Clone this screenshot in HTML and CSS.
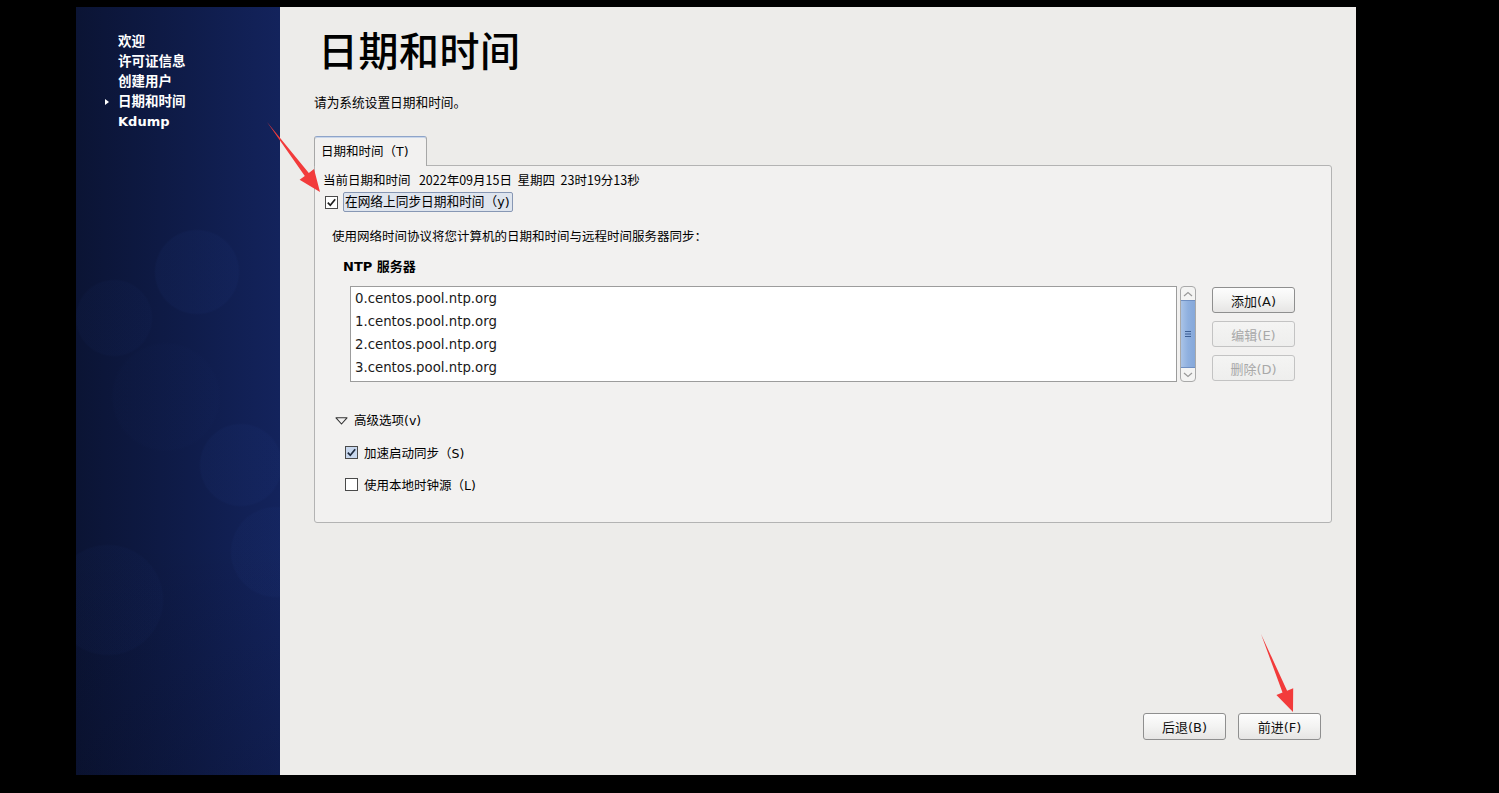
FILE: index.html
```html
<!DOCTYPE html>
<html lang="zh-CN">
<head>
<meta charset="utf-8">
<title>日期和时间</title>
<link rel="stylesheet" href="styles.css">
</head>
<body>
<div class="screen">
  <div class="window">
    <aside class="sidebar">
      <ul class="steps">
        <li>欢迎</li>
        <li>许可证信息</li>
        <li>创建用户</li>
        <li class="current">日期和时间</li>
        <li class="latin">Kdump</li>
      </ul>
    </aside>
    <main class="main">
      <h1 class="title">日期和时间</h1>
      <p class="intro">请为系统设置日期和时间。</p>
      <div class="tabs"><div class="tab">日期和时间（T)</div></div>
      <section class="panel">
        <div class="now">当前日期和时间&nbsp;&nbsp;&nbsp;2022年09月15日&nbsp;&nbsp;星期四&nbsp;&nbsp;23时19分13秒</div>
        <div class="check-row sync">
          <svg class="cb" width="13" height="13" viewBox="0 0 13 13"><rect x="0.5" y="0.5" width="12" height="12" fill="#fff" stroke="#4a4a4a"/><path d="M2.8 6.6 L5.3 9.3 L10.2 3.2" fill="none" stroke="#1e1e1e" stroke-width="1.7"/></svg>
          <span class="focus-label">在网络上同步日期和时间（y)</span>
        </div>
        <p class="desc">使用网络时间协议将您计算机的日期和时间与远程时间服务器同步：</p>
        <h2 class="ntp">NTP 服务器</h2>
        <div class="server-row">
          <ul class="server-list">
            <li>0.centos.pool.ntp.org</li>
            <li>1.centos.pool.ntp.org</li>
            <li>2.centos.pool.ntp.org</li>
            <li>3.centos.pool.ntp.org</li>
          </ul>
          <div class="scrollbar">
            <div class="sb-btn"><svg width="10" height="6" viewBox="0 0 10 6"><path d="M1 5 L5 1.5 L9 5" fill="none" stroke="#9a9a9a" stroke-width="1.2"/></svg></div>
            <div class="sb-thumb"><svg width="6" height="8" viewBox="0 0 6 8"><path d="M0 1.5 H6 M0 4 H6 M0 6.5 H6" stroke="#3d5f94" stroke-width="1"/></svg></div>
            <div class="sb-btn"><svg width="10" height="6" viewBox="0 0 10 6"><path d="M1 1 L5 4.5 L9 1" fill="none" stroke="#9a9a9a" stroke-width="1.2"/></svg></div>
          </div>
          <div class="side-buttons">
            <button class="btn">添加(A)</button>
            <button class="btn" disabled>编辑(E)</button>
            <button class="btn" disabled>删除(D)</button>
          </div>
        </div>
        <div class="expander">
          <svg width="13" height="8" viewBox="0 0 13 8"><path d="M1 0.8 H12 L6.5 7 Z" fill="none" stroke="#333" stroke-width="1.1" stroke-linejoin="round"/></svg>
          <span>高级选项(v)</span>
        </div>
        <div class="check-row opt">
          <svg class="cb" width="13" height="13" viewBox="0 0 13 13"><rect x="0.5" y="0.5" width="12" height="12" fill="#c9d8ee" stroke="#4a4a4a"/><path d="M2.8 6.6 L5.3 9.3 L10.2 3.2" fill="none" stroke="#1e2a3e" stroke-width="1.7"/></svg>
          <span>加速启动同步（S)</span>
        </div>
        <div class="check-row opt">
          <svg class="cb" width="13" height="13" viewBox="0 0 13 13"><rect x="0.5" y="0.5" width="12" height="12" fill="#fff" stroke="#4a4a4a"/></svg>
          <span>使用本地时钟源（L)</span>
        </div>
      </section>
      <div class="nav">
        <button class="btn nav-btn">后退(B)</button>
        <button class="btn nav-btn">前进(F)</button>
      </div>
    </main>
  </div>
  <svg class="annotations" width="1499" height="793" viewBox="0 0 1499 793">
    <polygon points="267,122 308.8,172.9 314,169 320,192 299.6,179.8 304.8,175.9" fill="#f23b3b"/>
    <polygon points="1261,634 1287.1,690.7 1293.2,688.2 1293,712 1276.4,695 1282.5,692.5" fill="#f23b3b"/>
  </svg>
</div>
</body>
</html>
```

FILE: styles.css
```css
* { box-sizing: border-box; }

html, body {
  margin: 0;
  padding: 0;
  background: #000;
}

body {
  width: 1499px;
  height: 793px;
  overflow: hidden;
  font-family: "DejaVu Sans", "Noto Sans CJK SC", sans-serif;
  color: #000;
}

.screen {
  position: relative;
  width: 1499px;
  height: 793px;
  padding: 7px 0 0 76px;
}

.window {
  display: flex;
  width: 1280px;
  height: 768px;
}

/* ---------- sidebar ---------- */
.sidebar {
  width: 204px;
  flex: 0 0 204px;
  padding-top: 24px;
  background:
    radial-gradient(circle at 121px 265px, rgba(40, 70, 150, 0.08) 0 41px, rgba(40, 70, 150, 0) 43px),
    radial-gradient(circle at 38px 311px, rgba(40, 70, 150, 0.05) 0 37px, rgba(40, 70, 150, 0) 39px),
    radial-gradient(circle at 90px 390px, rgba(40, 70, 150, 0.025) 0 52px, rgba(40, 70, 150, 0) 55px),
    radial-gradient(circle at 165px 458px, rgba(40, 70, 150, 0.08) 0 40px, rgba(40, 70, 150, 0) 42px),
    radial-gradient(circle at 200px 545px, rgba(40, 70, 150, 0.07) 0 44px, rgba(40, 70, 150, 0) 46px),
    radial-gradient(circle at 32px 593px, rgba(40, 70, 150, 0.05) 0 54px, rgba(40, 70, 150, 0) 56px),
    linear-gradient(180deg, rgba(0, 0, 0, 0) 70%, rgba(5, 8, 25, 0.2) 100%),
    linear-gradient(90deg, #0b1434 0%, #0f1c4a 55%, #13235c 100%);
}

.steps {
  list-style: none;
  margin: 0;
  padding: 0 0 0 42px;
}

.steps li {
  height: 20px;
  line-height: 20px;
  font-size: 13.5px;
  font-weight: bold;
  color: #fff;
  white-space: nowrap;
}

.steps li.current::before {
  content: "";
  display: inline-block;
  margin-left: -13px;
  margin-right: 9px;
  vertical-align: 1px;
  border-left: 4px solid #fff;
  border-top: 3.5px solid transparent;
  border-bottom: 3.5px solid transparent;
}

.steps li.latin {
  font-size: 13px;
  margin-top: 1px;
}

/* ---------- main ---------- */
.main {
  flex: 1;
  display: flex;
  flex-direction: column;
  background: #edecea;
  padding: 20px 24px 35px 34px;
}

.title {
  margin: 0 0 0 4px;
  height: 44px;
  line-height: 44px;
  font-family: "Noto Sans CJK SC", sans-serif;
  font-size: 40px;
  font-weight: 500;
  color: #000;
  letter-spacing: 0.5px;
}

.intro {
  margin: 23px 0 0;
  height: 18px;
  line-height: 18px;
  font-size: 12.7px;
}

.tabs {
  display: flex;
  margin-top: 24px;
}

.tab {
  position: relative;
  z-index: 1;
  width: 113px;
  height: 30px;
  margin-bottom: -1px;
  padding: 7px 0 0 6px;
  font-size: 12.5px;
  line-height: 16px;
  background: #f2f1f0;
  border: 1px solid #a7a7a7;
  border-top-color: #8ea4c9;
  border-bottom: none;
  border-radius: 3px 3px 0 0;
  box-shadow: inset 0 1px 0 #c9d6ea;
}

.panel {
  height: 358px;
  background: #f2f1f0;
  border: 1px solid #b3b3b3;
  border-radius: 0 3px 3px 3px;
  padding: 5px 0 0 8px;
  font-size: 12.5px;
}

.now {
  height: 18px;
  line-height: 18px;
  white-space: nowrap;
  font-family: "Noto Sans CJK SC", sans-serif;
}

.check-row {
  display: flex;
  align-items: center;
  white-space: nowrap;
}

.cb {
  flex: 0 0 13px;
  display: block;
}

.check-row.sync {
  margin: 3px 0 0 2px;
  height: 20px;
}

.focus-label {
  margin-left: 5px;
  height: 20px;
  line-height: 18px;
  padding: 0 2px 0 1px;
  background: #dfe5ee;
  border: 1px solid #8797b4;
  border-radius: 2px;
  font-size: 12.7px;
}

.desc {
  margin: 15px 0 0 9px;
  height: 18px;
  line-height: 18px;
  font-size: 12.5px;
  font-family: "Noto Sans CJK SC", sans-serif;
}

.ntp {
  margin: 13px 0 0 20px;
  height: 18px;
  line-height: 18px;
  font-size: 13px;
  font-weight: bold;
}

.server-row {
  display: flex;
  margin: 10px 36px 0 27px;
}

.server-list {
  flex: 1;
  list-style: none;
  margin: 0;
  padding: 0 0 0 4px;
  height: 96px;
  background: #fff;
  border: 1px solid #9c9c9c;
}

.server-list li {
  height: 23px;
  line-height: 23px;
  font-size: 13.3px;
  color: #1a1a1a;
}

.scrollbar {
  margin-left: 3px;
  width: 16px;
  height: 96px;
  display: flex;
  flex-direction: column;
  border: 1px solid #a9a9a9;
  border-radius: 4px;
  background: #f4f4f3;
  overflow: hidden;
}

.sb-btn {
  height: 13px;
  flex: 0 0 13px;
  display: flex;
  align-items: center;
  justify-content: center;
}

.sb-thumb {
  flex: 1;
  display: flex;
  align-items: center;
  justify-content: center;
  background: linear-gradient(90deg, #a9c3e7, #8fb0df 50%, #86a8da);
  border-top: 1px solid #6f8fc2;
  border-bottom: 1px solid #6f8fc2;
}

.side-buttons {
  margin-left: 16px;
  display: flex;
  flex-direction: column;
  gap: 8px;
  padding-top: 1px;
}

.btn {
  width: 83px;
  height: 26px;
  padding: 0;
  font-family: "DejaVu Sans", "Noto Sans CJK SC", sans-serif;
  font-size: 13px;
  color: #111;
  background: linear-gradient(180deg, #fdfdfd 0%, #f3f3f2 50%, #e6e5e4 100%);
  border: 1px solid #8f8f8f;
  border-radius: 3px;
}

.btn:disabled {
  color: #a8a8a8;
  border-color: #c3c3c3;
  background: linear-gradient(180deg, #f4f4f3 0%, #eeeeed 100%);
}

.expander {
  display: flex;
  align-items: center;
  gap: 6px;
  margin: 30px 0 0 12px;
  height: 18px;
  line-height: 18px;
  white-space: nowrap;
}

.check-row.opt {
  margin: 12px 0 0 22px;
  height: 20px;
  gap: 6px;
}

.nav {
  margin-top: auto;
  display: flex;
  justify-content: flex-end;
  gap: 12px;
  padding-right: 11px;
}

.nav-btn {
  height: 27px;
}

.annotations {
  position: absolute;
  top: 0;
  left: 0;
  pointer-events: none;
}
```
